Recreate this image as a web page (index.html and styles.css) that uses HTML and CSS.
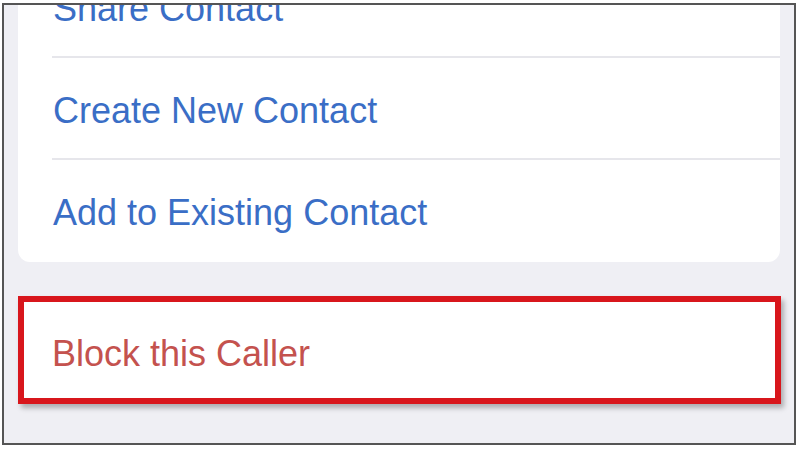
FILE: index.html
```html
<!DOCTYPE html>
<html lang="en">
<head>
<meta charset="utf-8">
<title>Contact options</title>
<link rel="stylesheet" href="styles.css">
</head>
<body>
<div class="frame">
  <div class="card">
    <div class="row"><div class="row-inner">Share Contact</div></div>
    <div class="row"><div class="row-inner">Create New Contact</div></div>
    <div class="row last"><div class="row-inner">Add to Existing Contact</div></div>
  </div>
  <div class="block-cell">Block this Caller</div>
</div>
</body>
</html>
```

FILE: styles.css
```css
html, body {
  margin: 0;
  padding: 0;
  background: #ffffff;
}

body {
  font-family: "Liberation Sans", Arial, sans-serif;
  width: 800px;
  height: 450px;
  overflow: hidden;
}

.frame {
  margin: 3px 0 0 2px;
  width: 794px;
  height: 442px;
  box-sizing: border-box;
  border: 2px solid #555555;
  background: #efeff4;
  overflow: hidden;
}

.card {
  margin: -49px 14px 0 14px;
  background: #ffffff;
  border-radius: 0 0 12px 12px;
}

.row {
  height: 102px;
  padding-left: 34px;
  box-sizing: border-box;
}

.row-inner {
  height: 102px;
  box-sizing: border-box;
  padding: 33px 0 0 1px;
  font-size: 36px;
  line-height: 40px;
  color: #3a6ec6;
  border-bottom: 2px solid #e6e6eb;
}

.row.last .row-inner {
  border-bottom: none;
}

.block-cell {
  margin: 34px 13px 0 14px;
  height: 108px;
  box-sizing: border-box;
  border: 6px solid #d8161c;
  background: #ffffff;
  box-shadow: 3px 4px 5px rgba(0, 0, 0, 0.28);
  padding: 32px 0 0 28px;
  font-size: 36px;
  line-height: 40px;
  color: #c4524e;
}
```
